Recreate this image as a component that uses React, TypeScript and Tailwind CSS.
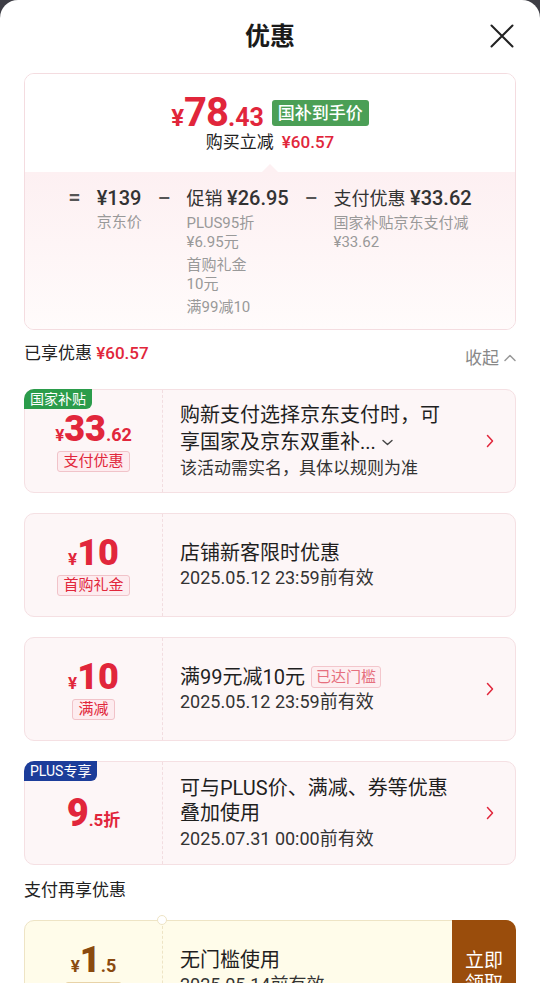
import React from "react";

const RED = "text-[#e1263b]";

function ChevronRight({ color = "#e1263b" }: { color?: string }) {
  return (
    <svg width="8" height="14" viewBox="0 0 8 14" fill="none">
      <path d="M1.5 1.5L6.5 7L1.5 12.5" stroke={color} strokeWidth="1.5" strokeLinecap="round" strokeLinejoin="round" />
    </svg>
  );
}

function Card({
  children,
  left,
  tag,
  chevron = true,
}: {
  children: React.ReactNode;
  left: React.ReactNode;
  tag?: React.ReactNode;
  chevron?: boolean;
}) {
  return (
    <div className="relative flex h-[104px] rounded-[10px] border border-[#f5e0e3] bg-[#fdf6f7]">
      {tag}
      <div className="flex w-[138px] shrink-0 flex-col items-center justify-center border-r border-dashed border-[#f2dde0]">
        {left}
      </div>
      <div className="flex flex-1 items-center pl-[17px] pr-[21px]">
        <div className="flex-1">{children}</div>
        {chevron && <ChevronRight />}
      </div>
    </div>
  );
}

function Pill({ children }: { children: React.ReactNode }) {
  return (
    <div className="mt-[4px] rounded-[3px] border border-[#f1c3c9] bg-[#fdecef] px-[5px] text-[15px] leading-[19px] text-[#e1263b]">
      {children}
    </div>
  );
}

export default function App() {
  return (
    <div className="h-[983px] w-[540px] overflow-hidden bg-[#3e3e45] font-['Roboto','Noto_Sans_CJK_SC','Noto_Sans',sans-serif]">
      <div className="h-full rounded-t-[18px] bg-white px-6">
        {/* header */}
        <div className="relative flex h-[73px] items-center justify-center">
          <div className="pt-[1px] text-[25px] font-bold text-[#1a1a1a]">优惠</div>
          <svg className="absolute right-[2px] top-[24px]" width="24" height="24" viewBox="0 0 24 24" fill="none">
            <path d="M1.5 1.5L22.5 22.5M22.5 1.5L1.5 22.5" stroke="#222" strokeWidth="2" strokeLinecap="round" />
          </svg>
        </div>

        {/* summary card */}
        <div className="overflow-hidden rounded-[10px] border border-[#f4dce0]">
          <div className="flex h-[98px] flex-col items-center bg-white pt-[21px]">
            <div className="flex h-[36px] items-center">
              <div className={`flex items-baseline font-bold ${RED}`}>
                <span className="text-[24px] leading-none">¥</span>
                <span className="text-[40px] leading-none tracking-[-1px]">78</span>
                <span className="text-[25px] leading-none">.43</span>
              </div>
              <div className="ml-[8px] h-[26px] rounded-[3px] bg-[#4b9f56] px-[6px] text-[17px] font-medium leading-[26px] text-white">
                国补到手价
              </div>
            </div>
            <div className="flex items-center text-[17px] leading-[22px] text-[#222]">
              <span>购买立减</span>
              <span className={`ml-[8px] font-medium ${RED}`}>¥60.57</span>
            </div>
          </div>
          <div className="relative h-[157px] bg-gradient-to-b from-[#fdf0f2] to-[#fffbfb] pt-[13px]">
            <div className="absolute left-1/2 top-[-8px] h-0 w-0 -translate-x-1/2 border-x-[8px] border-b-[8px] border-x-transparent border-b-[#fdf0f2]" />
            <div className="flex items-start justify-center gap-[16px] text-[#333]">
              <div className="text-[22px] font-medium leading-[26px] text-[#555]">=</div>
              <div>
                <div className="text-[20px] font-medium leading-[26px]">¥139</div>
                <div className="mt-[2px] text-[15px] leading-[19px] text-[#999]">京东价</div>
              </div>
              <div className="text-[20px] font-medium leading-[26px] text-[#555]">–</div>
              <div>
                <div className="text-[18px] leading-[26px]">
                  促销 <span className="text-[20px] font-medium">¥26.95</span>
                </div>
                <div className="mt-[2px] text-[15px] leading-[19px] text-[#999]">
                  <div>PLUS95折</div>
                  <div>¥6.95元</div>
                  <div className="mt-[4px]">首购礼金</div>
                  <div>10元</div>
                  <div className="mt-[4px]">满99减10</div>
                </div>
              </div>
              <div className="text-[20px] font-medium leading-[26px] text-[#555]">–</div>
              <div>
                <div className="text-[18px] leading-[26px]">
                  支付优惠 <span className="text-[20px] font-medium">¥33.62</span>
                </div>
                <div className="mt-[2px] text-[15px] leading-[19px] text-[#999]">
                  <div>国家补贴京东支付减</div>
                  <div>¥33.62</div>
                </div>
              </div>
            </div>
          </div>
        </div>

        {/* enjoyed row */}
        <div className="mt-[12px] flex items-start justify-between">
          <div className="text-[17px] leading-[22px] text-[#222]">
            已享优惠 <span className={`font-medium ${RED}`}>¥60.57</span>
          </div>
          <div className="flex items-center pt-[5px] text-[17px] leading-[22px] text-[#888]">
            收起
            <svg className="ml-[5px]" width="12" height="8" viewBox="0 0 12 8" fill="none">
              <path d="M1 6.5L6 1.5L11 6.5" stroke="#999" strokeWidth="1.5" strokeLinecap="round" strokeLinejoin="round" />
            </svg>
          </div>
        </div>

        {/* coupon list */}
        <div className="mt-[20px] flex flex-col gap-[20px]">
          <Card
            tag={
              <div className="absolute left-[-1px] top-[-1px] rounded-br-[6px] rounded-tl-[10px] bg-[#2b9c4b] px-[6px] text-[14px] leading-[20px] text-white">
                国家补贴
              </div>
            }
            left={
              <>
                <div className={`flex items-baseline font-bold ${RED}`}>
                  <span className="text-[17px] leading-none">¥</span>
                  <span className="text-[36px] font-black leading-none">33</span>
                  <span className="text-[18px] leading-none">.62</span>
                </div>
                <Pill>支付优惠</Pill>
              </>
            }
          >
            <div className="text-[20px] leading-[27px] text-[#1f1f1f]">购新支付选择京东支付时，可</div>
            <div className="flex items-center text-[20px] leading-[27px] text-[#1f1f1f]">
              享国家及京东双重补...
              <svg className="ml-[6px]" width="11" height="7" viewBox="0 0 11 7" fill="none">
                <path d="M1 1.5L5.5 5.5L10 1.5" stroke="#444" strokeWidth="1.4" strokeLinecap="round" strokeLinejoin="round" />
              </svg>
            </div>
            <div className="text-[17px] leading-[24px] text-[#333]">该活动需实名，具体以规则为准</div>
          </Card>

          <Card
            chevron={false}
            left={
              <>
                <div className={`flex items-baseline font-bold ${RED}`}>
                  <span className="text-[17px] leading-none">¥</span>
                  <span className="text-[36px] font-black leading-none">10</span>
                </div>
                <Pill>首购礼金</Pill>
              </>
            }
          >
            <div className="text-[20px] leading-[26px] text-[#1f1f1f]">店铺新客限时优惠</div>
            <div className="text-[18px] leading-[24px] text-[#333]">2025.05.12 23:59前有效</div>
          </Card>

          <Card
            left={
              <>
                <div className={`flex items-baseline font-bold ${RED}`}>
                  <span className="text-[17px] leading-none">¥</span>
                  <span className="text-[36px] font-black leading-none">10</span>
                </div>
                <Pill>满减</Pill>
              </>
            }
          >
            <div className="flex items-center text-[20px] leading-[26px] text-[#1f1f1f]">
              满99元减10元
              <span className="ml-[6px] rounded-[3px] border border-[#f3c6cc] bg-[#fdeff1] px-[4px] text-[15px] leading-[20px] text-[#e66f7e]">
                已达门槛
              </span>
            </div>
            <div className="text-[18px] leading-[24px] text-[#333]">2025.05.12 23:59前有效</div>
          </Card>

          <Card
            tag={
              <div className="absolute left-[-1px] top-[-1px] rounded-br-[6px] rounded-tl-[10px] bg-[#1c3d9a] px-[6px] text-[14px] leading-[20px] text-white">
                PLUS专享
              </div>
            }
            left={
              <div className={`flex items-baseline font-bold ${RED}`}>
                <span className="text-[38px] font-black leading-none">9</span>
                <span className="text-[17px] leading-none">.5折</span>
              </div>
            }
          >
            <div className="text-[20px] leading-[25px] text-[#1f1f1f]">可与PLUS价、满减、券等优惠</div>
            <div className="text-[20px] leading-[25px] text-[#1f1f1f]">叠加使用</div>
            <div className="text-[18px] leading-[25px] text-[#333]">2025.07.31 00:00前有效</div>
          </Card>
        </div>

        <div className="mt-[14px] text-[17px] leading-[22px] text-[#222]">支付再享优惠</div>

        {/* pay coupon */}
        <div className="relative mt-[19px] flex h-[104px] rounded-[10px] border border-[#eee4c5] bg-[#fffcea]">
          <div className="absolute left-[132px] top-[-6px] h-[10px] w-[10px] rounded-full border border-[#eee4c5] bg-white" />
          <div className="flex w-[138px] shrink-0 flex-col items-center justify-center border-r border-dashed border-[#eee4c5]">
            <div className="flex items-baseline font-bold text-[#8a4a0f]">
              <span className="text-[17px] leading-none">¥</span>
              <span className="text-[36px] font-black leading-none">1</span>
              <span className="text-[18px] leading-none">.5</span>
            </div>
            <div className="mt-[4px] rounded-[3px] border border-[#e8d3a8] bg-[#fdf3d8] px-[5px] text-[15px] leading-[19px] text-[#8a4a0f]">
              支付券
            </div>
          </div>
          <div className="flex flex-1 flex-col justify-center pl-[17px]">
            <div className="text-[20px] leading-[26px] text-[#1f1f1f]">无门槛使用</div>
            <div className="text-[18px] leading-[24px] text-[#333]">2025.05.14前有效</div>
          </div>
          <div className="my-[-1px] mr-[-1px] flex w-[64px] flex-col items-center justify-center rounded-r-[10px] bg-[#9a4d0c] text-[19px] leading-[23px] text-white">
            <span>立即</span>
            <span>领取</span>
          </div>
        </div>
      </div>
    </div>
  );
}
